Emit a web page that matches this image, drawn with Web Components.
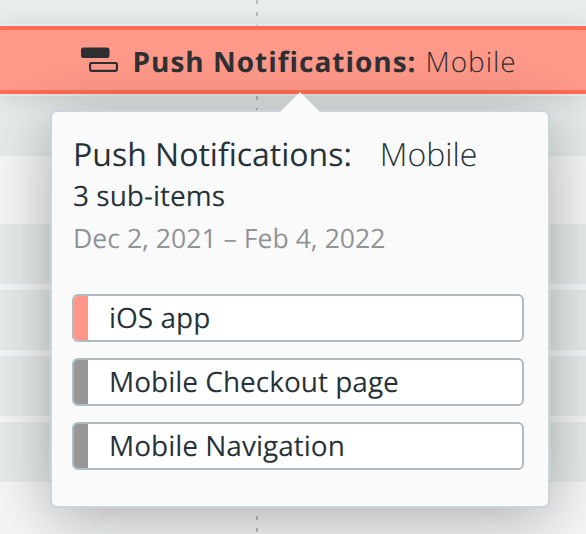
<!DOCTYPE html>
<html lang="en">
<head>
<meta charset="utf-8">
<title>Push Notifications</title>
<style>
html, body { margin: 0; height: 100%; overflow: hidden; }
body { font-family: "Open Sans", "Noto Sans", sans-serif; text-rendering: geometricPrecision; }
</style>
</head>
<body>
<timeline-board>
  <timeline-bar slot="bar">
    <span slot="name">Push Notifications:</span>
    <span slot="area">Mobile</span>
  </timeline-bar>
  <item-popover slot="popover">
    <span slot="name">Push Notifications:</span>
    <span slot="area">Mobile</span>
    <span slot="count">3 sub-items</span>
    <span slot="dates">Dec 2, 2021 – Feb 4, 2022</span>
    <sub-item style="--tag:#ff9688">iOS app</sub-item>
    <sub-item>Mobile Checkout page</sub-item>
    <sub-item>Mobile Navigation</sub-item>
  </item-popover>
</timeline-board>
<script>
class TimelineBoard extends HTMLElement {
  constructor() {
    super();
    this.attachShadow({ mode: "open" }).innerHTML = `
      <style>
        :host { display: block; position: relative; width: 586px; height: 534px; overflow: hidden; background: #f4f5f7; }
        .rows { display: grid; grid-template-rows: 26px 68px 62px; }
        .head { background: #e9eded; }
        .under { background: #e6eaea; }
        .lanes { display: grid; gap: 6px; padding-top: 68px; grid-auto-rows: 60px; }
        .lanes i { background: #e6eae9; }
        .marker { position: absolute; left: 256px; top: 0; width: 2px; height: 100%;
          background: repeating-linear-gradient(#b7b9bb 0 4px, transparent 4px 12px); }
        ::slotted(timeline-bar) { position: relative; }
        ::slotted(item-popover) { position: absolute; left: 50px; top: 110px; }
      </style>
      <div class="rows"><div class="head"></div><slot name="bar"></slot><div class="under"></div></div>
      <div class="lanes"><i></i><i></i><i></i><i></i></div>
      <div class="marker"></div>
      <slot name="popover"></slot>`;
  }
}
class TimelineBar extends HTMLElement {
  constructor() {
    super();
    this.attachShadow({ mode: "open" }).innerHTML = `
      <style>
        :host { display: flex; z-index: 1; box-sizing: border-box; height: 68px; align-items: center; padding-left: 81px;
          background: #ff9989; border: solid #ff6b54; border-width: 4px 0; color: #2f3033;
          box-shadow: 0 0 0 2px rgba(240,241,246,.5), 0 2px 22px rgba(60,50,70,.17); font-size: 28px; line-height: 38px; white-space: pre; }
        svg { flex: none; margin-right: 14.5px; }
        .name, .area { padding-top: 3px; }
        .name { font-weight: 700; letter-spacing: .98px; }
        .area { font-weight: 300; margin-left: 9px; letter-spacing: .95px; }
      </style>
      <svg width="37" height="26" viewBox="0 0 37 26"><rect x="0" y="0.5" width="28.5" height="10.5" rx="2.5" fill="#2f3033"/><rect x="9.1" y="16" width="26.8" height="7.8" rx="1.2" fill="none" stroke="#2f3033" stroke-width="2.2"/></svg>
      <span class="name"><slot name="name"></slot></span><span class="area"><slot name="area"></slot></span>`;
  }
}
class ItemPopover extends HTMLElement {
  constructor() {
    super();
    this.attachShadow({ mode: "open" }).innerHTML = `
      <style>
        :host { display: block; z-index: 2; box-sizing: border-box; width: 500px; height: 398px; padding: 23px 24px 0 20px;
          border: 2px solid #cad4da; border-radius: 7px; background: #fafafa; color: #263238;
          box-shadow: 0 10px 62px rgba(0,0,0,.3); }
        .arrow { position: absolute; left: 228px; top: -20px; width: 40px; height: 20px; background: #fafafa;
          clip-path: polygon(50% 0, 100% 100%, 0 100%); }
        .title { display: flex; gap: 28px; padding-left: 1px; font-size: 32px; line-height: 40px; margin-bottom: -1px; white-space: nowrap; }
        .area { font-weight: 300; }
        .count, .dates { font-size: 28px; line-height: 44px; padding-left: 1px; white-space: nowrap; }
        .dates { font-size: 26.6px; line-height: 40px; color: #919497; }
        .items { display: grid; gap: 16px; margin-top: 36px; }
      </style>
      <div class="arrow"></div>
      <div class="title"><span class="name"><slot name="name"></slot></span><span class="area"><slot name="area"></slot></span></div>
      <div class="count"><slot name="count"></slot></div>
      <div class="dates"><slot name="dates"></slot></div>
      <div class="items"><slot></slot></div>`;
  }
}
class SubItem extends HTMLElement {
  constructor() {
    super();
    this.attachShadow({ mode: "open" }).innerHTML = `
      <style>
        :host { display: flex; box-sizing: border-box; width: 452px; height: 48px; overflow: hidden; border: 2px solid #afbac1;
          border-radius: 6px; background: #fff; font-size: 28px; line-height: 44px; white-space: nowrap; }
        i { width: 14px; margin-right: 21px; background: var(--tag, #969696); }
      </style><i></i><span><slot></slot></span>`;
  }
}
customElements.define("timeline-board", TimelineBoard);
customElements.define("timeline-bar", TimelineBar);
customElements.define("item-popover", ItemPopover);
customElements.define("sub-item", SubItem);
</script>
</body>
</html>
